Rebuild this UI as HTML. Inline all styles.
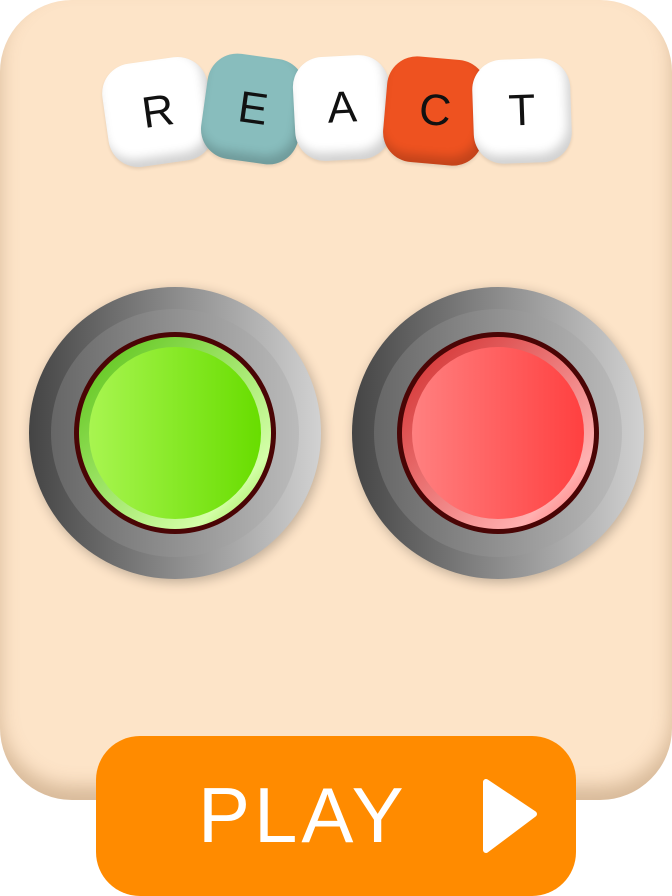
<!DOCTYPE html>
<html><head><style>
html,body{margin:0;padding:0;background:#fff;width:672px;height:896px;overflow:hidden;position:relative;font-family:"Liberation Sans",sans-serif}
.panel{position:absolute;left:0;top:0;width:672px;height:800px;border-radius:72px;background:#fde4c8;box-shadow:inset 0 -14px 18px rgba(150,110,70,.35)}
.tile{position:absolute;border-radius:30px;box-shadow:inset -4px -8px 10px rgba(0,0,0,.18),0 2px 3px rgba(0,0,0,.1);display:flex;align-items:center;justify-content:center;font-size:44px;color:#111;font-weight:normal}
.play{position:absolute;left:96px;top:736px;width:480px;height:160px;border-radius:44px;background:#ff8b00;color:#fff;font-size:78px;letter-spacing:4px}
</style></head><body>
<div class="panel"></div>
<div class="tile" style="left:105px;top:60px;width:106px;height:104px;background:#fff;transform:rotate(-8deg)">R</div>
<div class="tile" style="left:204px;top:56px;width:98px;height:106px;background:#88bdbd;transform:rotate(8deg)">E</div>
<div class="tile" style="left:294px;top:56px;width:96px;height:104px;background:#fff;transform:rotate(-3deg)">A</div>
<div class="tile" style="left:385px;top:58px;width:100px;height:106px;background:#ee5220;transform:rotate(5deg)">C</div>
<div class="tile" style="left:473px;top:59px;width:98px;height:104px;background:#fff;transform:rotate(-2deg)">T</div>

<svg width="672" height="896" style="position:absolute;left:0;top:0">
<defs>
<linearGradient id="g1" x1="0" x2="1"><stop offset="0" stop-color="#444"/><stop offset="1" stop-color="#d2d2d2"/></linearGradient>
<linearGradient id="g2" x1="0" x2="1"><stop offset="0" stop-color="#666"/><stop offset="1" stop-color="#bbb"/></linearGradient>
<linearGradient id="gg" x1="0" x2="1"><stop offset="0" stop-color="#a8f550"/><stop offset="1" stop-color="#68dd00"/></linearGradient>
<linearGradient id="ggr" x1="0" y1="0" x2="1" y2="1"><stop offset="0" stop-color="#55c010"/><stop offset=".8" stop-color="#d4ffa8"/><stop offset="1" stop-color="#88e030"/></linearGradient>
<linearGradient id="rg" x1="0" x2="1"><stop offset="0" stop-color="#ff8080"/><stop offset="1" stop-color="#ff4040"/></linearGradient>
<linearGradient id="rgr" x1="0" y1="0" x2="1" y2="1"><stop offset="0" stop-color="#d02828"/><stop offset=".8" stop-color="#ffb0b0"/><stop offset="1" stop-color="#ff6060"/></linearGradient>
<filter id="sh" x="-20%" y="-20%" width="140%" height="140%"><feGaussianBlur stdDeviation="6"/></filter>
</defs>
<g>
<circle cx="177" cy="436" r="146" fill="#000" opacity=".25" filter="url(#sh)"/>
<circle cx="175" cy="433" r="146" fill="url(#g1)"/>
<circle cx="175" cy="433" r="124" fill="url(#g2)"/>
<circle cx="175" cy="433" r="101" fill="#4a0505"/>
<circle cx="175" cy="433" r="96" fill="url(#ggr)"/>
<circle cx="175" cy="433" r="86" fill="url(#gg)"/>
</g>
<g>
<circle cx="500" cy="436" r="146" fill="#000" opacity=".25" filter="url(#sh)"/>
<circle cx="498" cy="433" r="146" fill="url(#g1)"/>
<circle cx="498" cy="433" r="124" fill="url(#g2)"/>
<circle cx="498" cy="433" r="101" fill="#4a0505"/>
<circle cx="498" cy="433" r="96" fill="url(#rgr)"/>
<circle cx="498" cy="433" r="86" fill="url(#rg)"/>
</g>
</svg>
<div class="play"><span style="position:absolute;left:102px;top:34px;line-height:90px">PLAY</span>
<svg style="position:absolute;left:386px;top:42px" width="56" height="76"><path d="M4 4 L4 72 L52 36 Z" fill="#fff" stroke="#fff" stroke-width="6" stroke-linejoin="round"/></svg></div>
</body></html>
